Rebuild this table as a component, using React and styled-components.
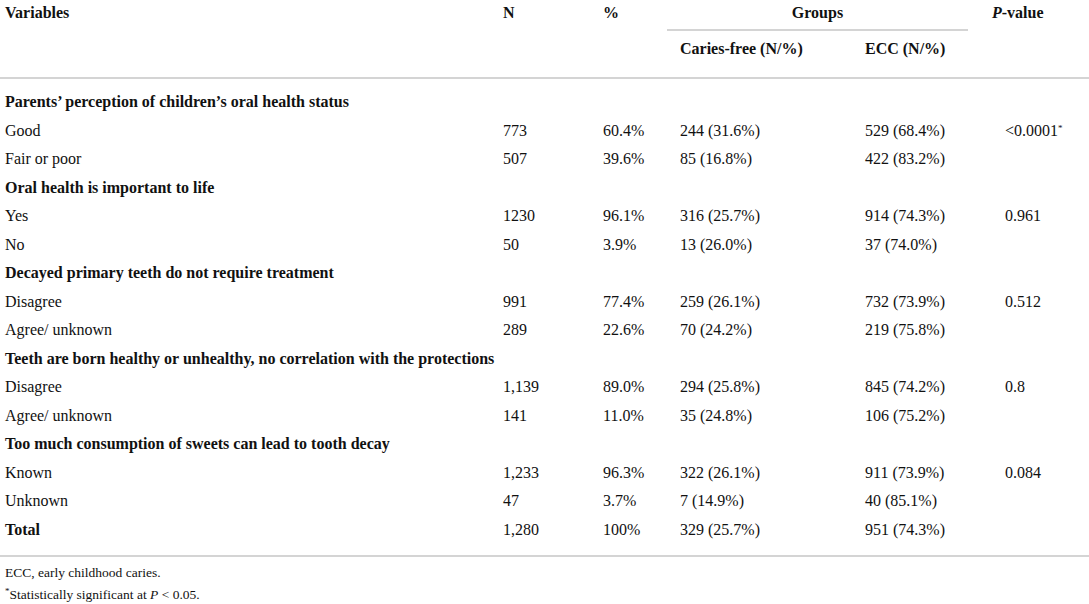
import React from "react";
import styled, { createGlobalStyle } from "styled-components";

const GlobalStyle = createGlobalStyle`
  html, body {
    margin: 0;
    padding: 0;
    background: #ffffff;
  }
  body {
    font-family: "Liberation Serif", "Times New Roman", serif;
    color: #111111;
  }
`;

const Page = styled.div`
  width: 1089px;
  height: 604px;
  overflow: hidden;
`;

const Table = styled.table`
  width: 1089px;
  border-collapse: collapse;
  table-layout: fixed;
  font-size: 16px;
`;

const Head = styled.thead`
  border-bottom: 2px solid #d4d4d4;
`;

const HeadCell = styled.th`
  font-weight: 700;
  text-align: ${(p) => (p.$center ? "center" : "left")};
  vertical-align: top;
  padding: ${(p) => (p.$sub ? "8px 0 18px" : "3px 0 0")};
  padding-left: ${(p) => p.$pad || 0}px;
  line-height: 20px;
  white-space: nowrap;
`;

const GroupLabel = styled.div`
  margin: 0 24px 0 -13px;
  padding-bottom: 6px;
  border-bottom: 2px solid #d4d4d4;
  text-align: center;
`;

const Body = styled.tbody`
  border-bottom: 2px solid #d4d4d4;
  & tr:first-child td {
    padding-top: 9px;
  }
  & tr:last-child td {
    padding-bottom: 11px;
  }
`;

const Cell = styled.td`
  height: 28.5px;
  padding: 0;
  padding-left: ${(p) => p.$pad || 0}px;
  line-height: 28.5px;
  font-weight: ${(p) => (p.$bold ? 700 : 400)};
  white-space: nowrap;
  vertical-align: middle;
`;

const Notes = styled.div`
  padding: 5px 5px 0;
  font-size: 13.5px;
  line-height: 22px;
`;

const Sup = styled.sup`
  font-size: 9px;
  vertical-align: 5px;
  line-height: 0;
`;

const sections = [
  {
    title: "Parents\u2019 perception of children\u2019s oral health status",
    rows: [
      ["Good", "773", "60.4%", "244 (31.6%)", "529 (68.4%)", "<0.0001*"],
      ["Fair or poor", "507", "39.6%", "85 (16.8%)", "422 (83.2%)", ""],
    ],
  },
  {
    title: "Oral health is important to life",
    rows: [
      ["Yes", "1230", "96.1%", "316 (25.7%)", "914 (74.3%)", "0.961"],
      ["No", "50", "3.9%", "13 (26.0%)", "37 (74.0%)", ""],
    ],
  },
  {
    title: "Decayed primary teeth do not require treatment",
    rows: [
      ["Disagree", "991", "77.4%", "259 (26.1%)", "732 (73.9%)", "0.512"],
      ["Agree/ unknown", "289", "22.6%", "70 (24.2%)", "219 (75.8%)", ""],
    ],
  },
  {
    title: "Teeth are born healthy or unhealthy, no correlation with the protections",
    rows: [
      ["Disagree", "1,139", "89.0%", "294 (25.8%)", "845 (74.2%)", "0.8"],
      ["Agree/ unknown", "141", "11.0%", "35 (24.8%)", "106 (75.2%)", ""],
    ],
  },
  {
    title: "Too much consumption of sweets can lead to tooth decay",
    rows: [
      ["Known", "1,233", "96.3%", "322 (26.1%)", "911 (73.9%)", "0.084"],
      ["Unknown", "47", "3.7%", "7 (14.9%)", "40 (85.1%)", ""],
    ],
  },
];

function PValue({ value }) {
  if (value.endsWith("*")) {
    return (
      <>
        {value.slice(0, -1)}
        <Sup>*</Sup>
      </>
    );
  }
  return value;
}

function DataRow({ row, bold }) {
  return (
    <tr>
      <Cell $pad={5} $bold={bold}>
        {row[0]}
      </Cell>
      <Cell>{row[1]}</Cell>
      <Cell>{row[2]}</Cell>
      <Cell>{row[3]}</Cell>
      <Cell>{row[4]}</Cell>
      <Cell $pad={13}>
        <PValue value={row[5]} />
      </Cell>
    </tr>
  );
}

export default function App() {
  return (
    <Page>
      <GlobalStyle />
      <Table>
        <colgroup>
          <col style={{ width: 503 }} />
          <col style={{ width: 100 }} />
          <col style={{ width: 77 }} />
          <col style={{ width: 185 }} />
          <col style={{ width: 127 }} />
          <col style={{ width: 97 }} />
        </colgroup>
        <Head>
          <tr>
            <HeadCell rowSpan={2} $pad={5}>
              Variables
            </HeadCell>
            <HeadCell rowSpan={2}>N</HeadCell>
            <HeadCell rowSpan={2}>%</HeadCell>
            <HeadCell colSpan={2}>
              <GroupLabel>Groups</GroupLabel>
            </HeadCell>
            <HeadCell rowSpan={2}>
              <i>P</i>-value
            </HeadCell>
          </tr>
          <tr>
            <HeadCell $sub>Caries-free (N/%)</HeadCell>
            <HeadCell $sub>ECC (N/%)</HeadCell>
          </tr>
        </Head>
        <Body>
          {sections.map((s) => (
            <React.Fragment key={s.title}>
              <tr>
                <Cell colSpan={6} $pad={5} $bold>
                  {s.title}
                </Cell>
              </tr>
              {s.rows.map((r, i) => (
                <DataRow key={s.title + i} row={r} />
              ))}
            </React.Fragment>
          ))}
          <DataRow bold row={["Total", "1,280", "100%", "329 (25.7%)", "951 (74.3%)", ""]} />
        </Body>
      </Table>
      <Notes>
        <div>ECC, early childhood caries.</div>
        <div>
          <Sup>*</Sup>Statistically significant at <i>P</i> &lt; 0.05.
        </div>
      </Notes>
    </Page>
  );
}
